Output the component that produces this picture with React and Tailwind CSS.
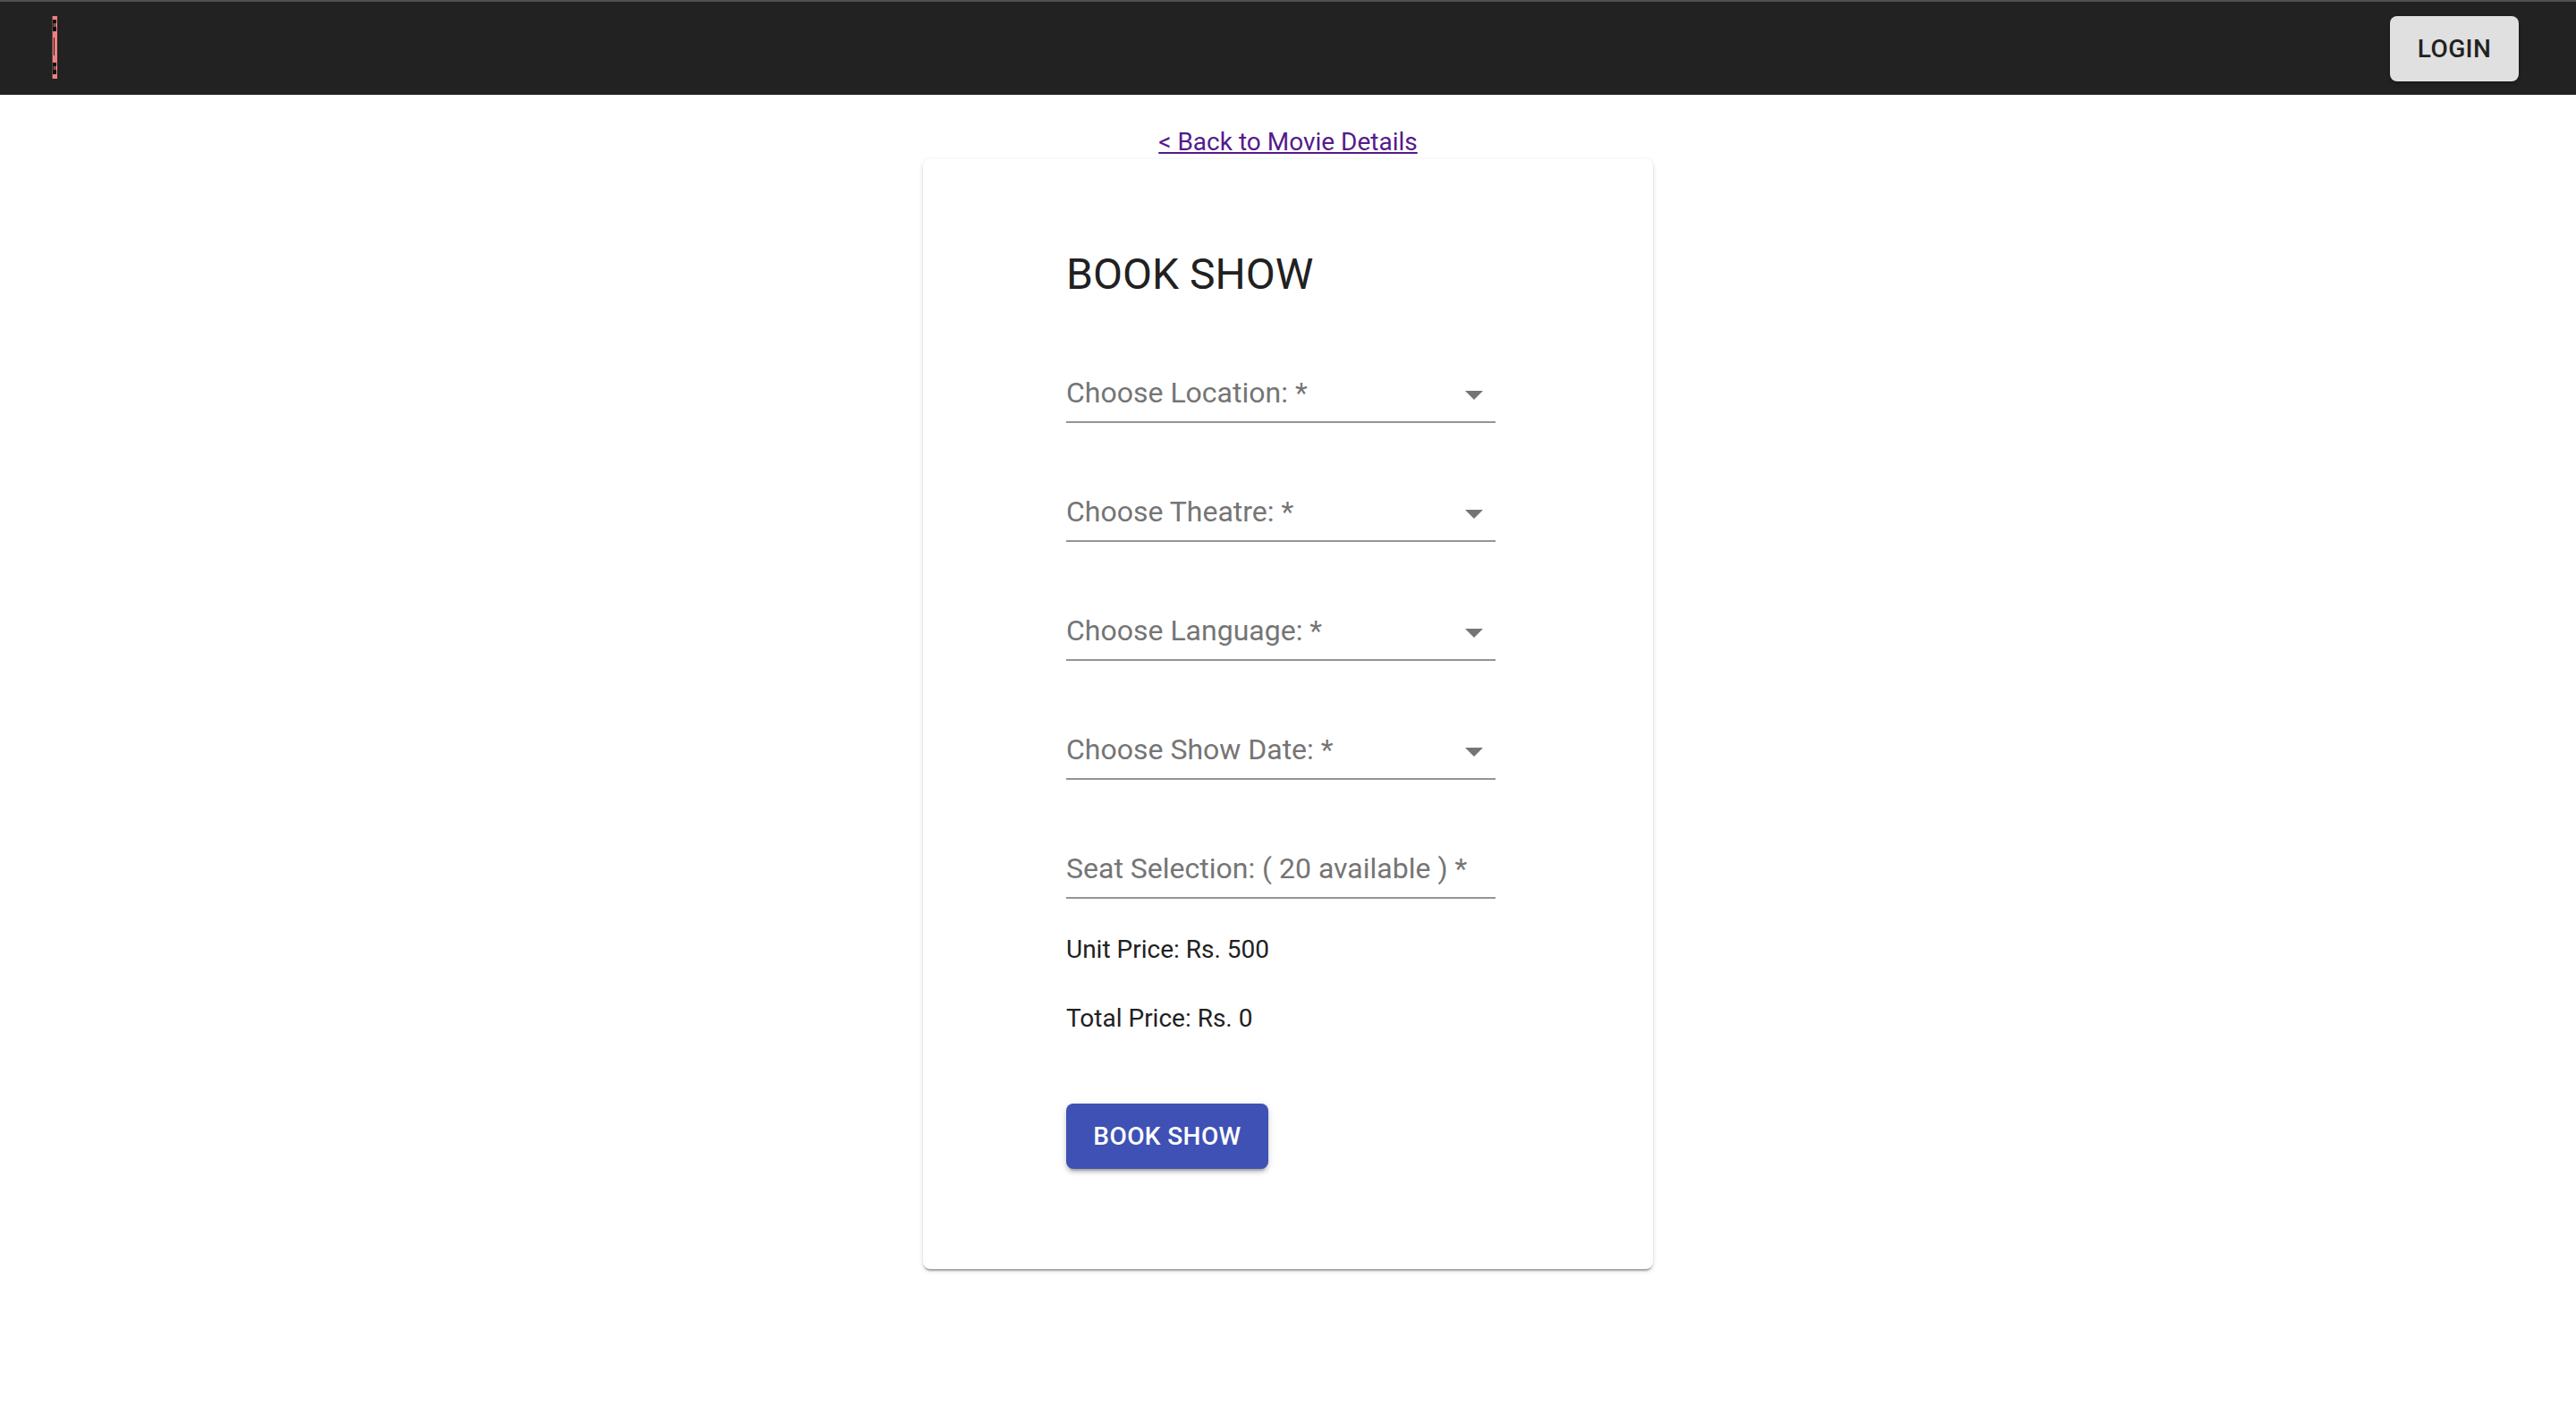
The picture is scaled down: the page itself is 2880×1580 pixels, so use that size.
import { useState } from 'react';

const fields = [
  { label: 'Choose Location:', select: true },
  { label: 'Choose Theatre:', select: true },
  { label: 'Choose Language:', select: true },
  { label: 'Choose Show Date:', select: true },
  { label: 'Seat Selection: ( 20 available )', select: false },
];

function Logo() {
  // squeezed poster image in the header
  return (
    <svg width="6" height="70" viewBox="0 0 6 70" className="block">
      <rect x="0" y="0" width="6" height="70" fill="#f08080" />
      <rect x="0" y="0" width="1" height="70" fill="#6b4a4a" />
      <rect x="1" y="4" width="4" height="13" fill="#111" />
      <rect x="2" y="8" width="1" height="4" fill="#f08080" />
      <rect x="4" y="8" width="1" height="4" fill="#f08080" />
      <rect x="2" y="24" width="1" height="20" fill="#3a1a1a" />
      <rect x="1" y="52" width="4" height="13" fill="#111" />
      <rect x="2" y="56" width="1" height="4" fill="#f08080" />
      <rect x="4" y="56" width="1" height="4" fill="#f08080" />
    </svg>
  );
}

function Field({ label, select }) {
  return (
    <div className="relative w-[480px] border-b-2 border-[#949494] pb-4">
      <div className="text-[32px] leading-none text-[#757575]">
        {label} *
      </div>
      {select && (
        <svg
          width="20"
          height="10"
          viewBox="0 0 20 10"
          className="absolute right-[14px] top-[14px]"
        >
          <path d="M0 0h20L10 10z" fill="#757575" />
        </svg>
      )}
    </div>
  );
}

export default function App() {
  const [seats] = useState(0);
  const unitPrice = 500;

  return (
    <div className="min-h-screen bg-white font-['Roboto',sans-serif]">
      {/* Header */}
      <header className="h-[106px] bg-[#222222] border-t-2 border-[#505050] flex items-start justify-between pl-[58px] pr-16">
        <div className="mt-4">
          <Logo />
        </div>
        <button className="mt-4 w-[144px] h-[73px] rounded-lg bg-[#e0e0e0] text-[#222222] text-[28px] font-medium tracking-[0.4px] shadow-[0_2px_4px_rgba(0,0,0,0.3)]">
          LOGIN
        </button>
      </header>

      {/* Back link */}
      <div className="text-center mt-[39px] mb-[5px] leading-none">
        <a href="#" className="text-[28px] leading-none text-[#551a8b] underline">
          &lt; Back to Movie Details
        </a>
      </div>

      {/* Booking card */}
      <div className="mx-auto w-[816px] bg-white rounded-lg pl-40 pt-[105px] pb-[112px] shadow-[0_4px_2px_-2px_rgba(0,0,0,0.2),0_2px_2px_0_rgba(0,0,0,0.14),0_2px_6px_0_rgba(0,0,0,0.12)]">
        <h2 className="text-[48px] leading-none text-[#212121] mb-[92px]">BOOK SHOW</h2>

        <div className="flex flex-col gap-[83px]">
          {fields.map((f) => (
            <Field key={f.label} label={f.label} select={f.select} />
          ))}
        </div>

        <div className="mt-[43px] text-[28px] leading-none text-[#212121]">
          Unit Price: Rs. {unitPrice}
        </div>
        <div className="mt-[49px] text-[28px] leading-none text-[#212121]">
          Total Price: Rs. {seats * unitPrice}
        </div>

        <button className="mt-[81px] w-[226px] h-[73px] rounded-lg bg-[#3f51b5] text-white text-[28px] font-medium tracking-[0.4px] shadow-[0_6px_2px_-4px_rgba(0,0,0,0.2),0_4px_4px_0_rgba(0,0,0,0.14),0_2px_10px_0_rgba(0,0,0,0.12)]">
          BOOK SHOW
        </button>
      </div>
    </div>
  );
}
